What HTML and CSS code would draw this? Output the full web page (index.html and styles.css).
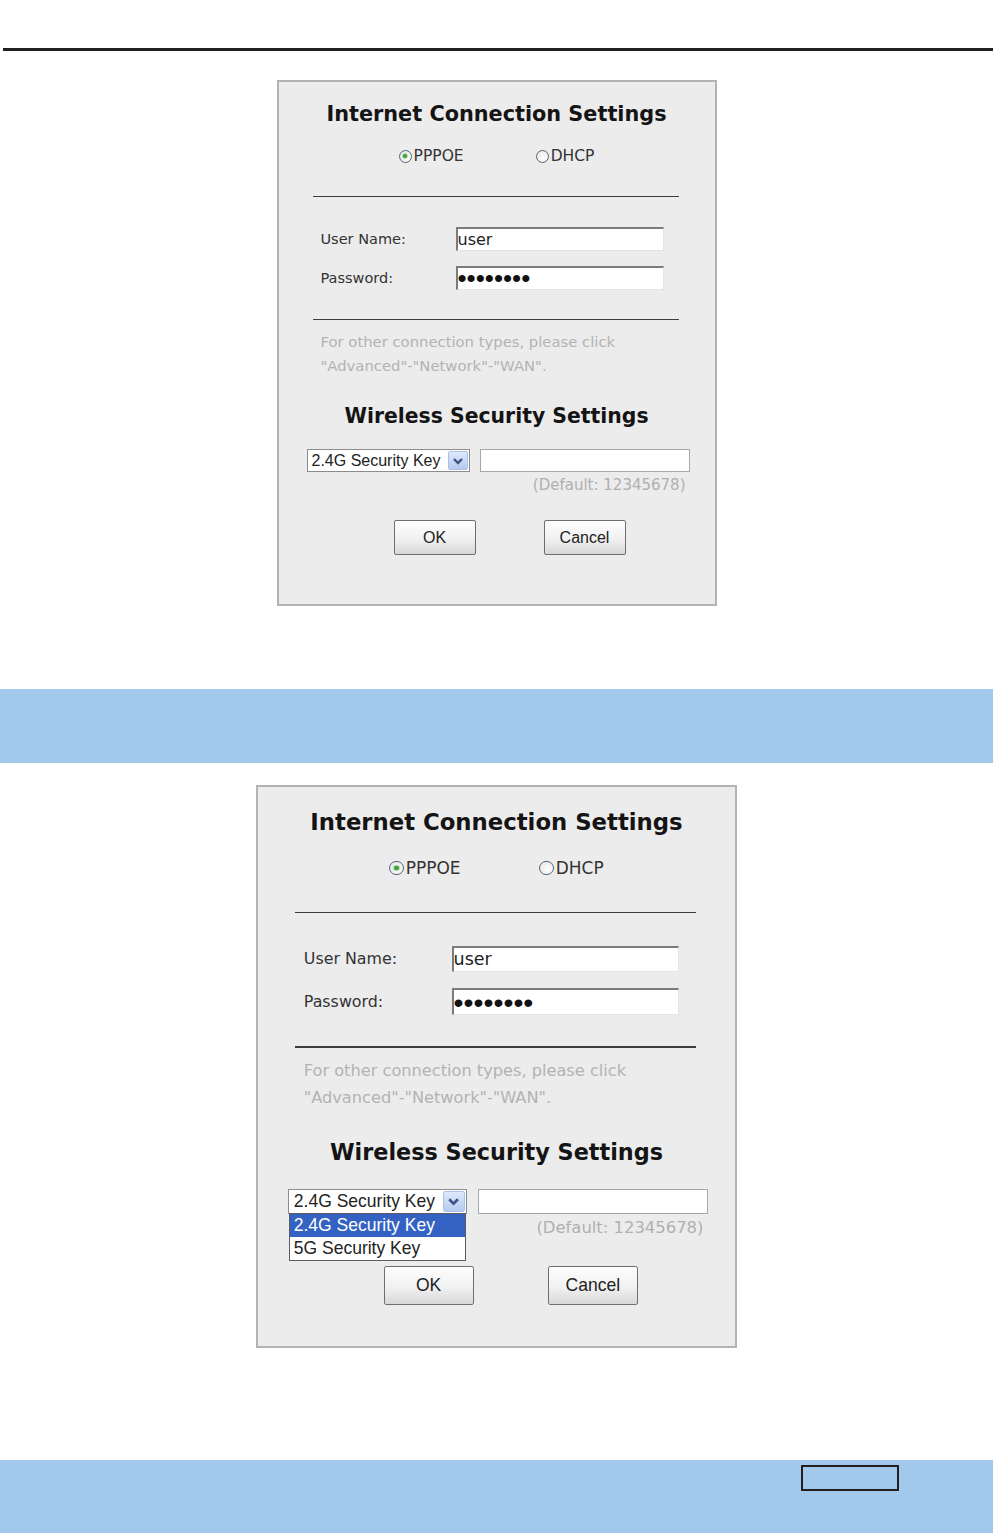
FILE: index.html
```html
<!DOCTYPE html>
<html lang="en">
<head>
    <meta charset="UTF-8">
    <meta name="viewport" content="width=device-width, initial-scale=1.0">
    <title>Quick Setup</title>
    <link rel="stylesheet" href="styles.css">
</head>
<body>
    <div class="rule"></div>

    <div class="dialog first">
        <h2 class="dialog-title">Internet Connection Settings</h2>
        <div class="radios">
            <label class="radio-item"><span class="radio checked"></span>PPPOE</label>
            <label class="radio-item"><span class="radio"></span>DHCP</label>
        </div>
        <div class="divider"></div>
        <div class="form-row">
            <span class="form-label">User Name:</span>
            <input class="text-field" type="text" value="user">
        </div>
        <div class="form-row second">
            <span class="form-label">Password:</span>
            <input class="text-field secret" type="password" value="12345678">
        </div>
        <div class="divider lower"></div>
        <p class="note">For other connection types, please click<br>"Advanced"-"Network"-"WAN".</p>
        <h2 class="dialog-title wireless">Wireless Security Settings</h2>
        <div class="key-row">
            <div class="select">
                <span class="select-value">2.4G Security Key</span>
                <span class="select-btn">
                    <svg width="12" height="10" viewBox="0 0 12 10"><path d="M2 3 L6 7 L10 3" fill="none" stroke="#3d5488" stroke-width="2.4"/></svg>
                </span>
            </div>
            <input class="key-field" type="text">
        </div>
        <div class="default-hint">(Default: 12345678)</div>
        <div class="buttons">
            <button>OK</button>
            <button>Cancel</button>
        </div>
    </div>

    <div class="band first"></div>

    <div class="dialog large">
        <h2 class="dialog-title">Internet Connection Settings</h2>
        <div class="radios">
            <label class="radio-item"><span class="radio checked"></span>PPPOE</label>
            <label class="radio-item"><span class="radio"></span>DHCP</label>
        </div>
        <div class="divider"></div>
        <div class="form-row">
            <span class="form-label">User Name:</span>
            <input class="text-field" type="text" value="user">
        </div>
        <div class="form-row second">
            <span class="form-label">Password:</span>
            <input class="text-field secret" type="password" value="12345678">
        </div>
        <div class="divider lower"></div>
        <p class="note">For other connection types, please click<br>"Advanced"-"Network"-"WAN".</p>
        <h2 class="dialog-title wireless">Wireless Security Settings</h2>
        <div class="key-row">
            <div class="select">
                <span class="select-value">2.4G Security Key</span>
                <span class="select-btn">
                    <svg width="12" height="10" viewBox="0 0 12 10"><path d="M2 3 L6 7 L10 3" fill="none" stroke="#3d5488" stroke-width="2.4"/></svg>
                </span>
                <ul class="listbox">
                    <li class="active">2.4G Security Key</li>
                    <li>5G Security Key</li>
                </ul>
            </div>
            <input class="key-field" type="text">
        </div>
        <div class="default-hint">(Default: 12345678)</div>
        <div class="buttons">
            <button>OK</button>
            <button>Cancel</button>
        </div>
    </div>

    <div class="band footer">
        <div class="page-box"></div>
    </div>
</body>
</html>
```

FILE: styles.css
```css
body {
    margin: 0;
    background: #fff;
    font-family: "DejaVu Sans", sans-serif;
}
.rule {
    height: 3px;
    margin: 48px 0 0 3px;
    background: #231f20;
}
.dialog {
    width: 436px;
    margin: 0 auto;
    padding: 18px 0 49px;
    background: #ececec;
    border: 2px solid #b3b3b3;
    color: #333;
    font-family: "DejaVu Sans", sans-serif;
}
.dialog.first {
    margin-top: 29px;
}
.dialog.large {
    zoom: 1.095;
    padding-bottom: 38px;
}
.dialog-title {
    margin: 0;
    font-size: 20.8px;
    line-height: 28px;
    font-weight: bold;
    text-align: center;
    color: #141414;
}
.dialog-title.wireless {
    margin-top: 24px;
    font-size: 20.4px;
}
.radios {
    display: flex;
    justify-content: center;
    align-items: center;
    gap: 72px;
    height: 20px;
    margin-top: 18px;
    font-size: 15.5px;
    color: #333;
}
.radio-item {
    display: flex;
    align-items: center;
    gap: 2px;
}
.radio {
    position: relative;
    width: 13px;
    height: 13px;
    box-sizing: border-box;
    border: 1px solid #56667a;
    border-radius: 50%;
    background: radial-gradient(circle at 60% 60%, #fff, #e2e2e2);
}
.radio.checked::after {
    content: "";
    position: absolute;
    left: 3.5px;
    top: 3.5px;
    width: 4px;
    height: 4px;
    border-radius: 50%;
    background: #3f9c42;
    box-shadow: 0 0 1px 1px #a8dca8;
}
.divider {
    width: 366px;
    height: 1px;
    margin: 30px 0 0 34px;
    background: #3c3c3c;
}
.divider.lower {
    margin-top: 29px;
}
.form-row {
    display: flex;
    align-items: center;
    margin-top: 30px;
    padding-left: 42px;
}
.form-row.second {
    margin-top: 15px;
}
.form-label {
    width: 135px;
    font-size: 14.5px;
}
.text-field {
    width: 208px;
    height: 24px;
    box-sizing: border-box;
    margin: 0;
    padding: 0;
    border-style: solid;
    border-width: 2px 1px 1px 2px;
    border-color: #7b7b7b #e4e4e4 #e4e4e4 #7b7b7b;
    background: #fff;
    font: 16px "DejaVu Sans", sans-serif;
    color: #222;
}
.text-field.secret {
    font: 26px "Liberation Sans", Arial, sans-serif;
    color: #111;
}
.note {
    margin: 10px 0 0;
    padding-left: 42px;
    font-size: 14.8px;
    line-height: 24px;
    color: #b3b3b3;
}
.key-row {
    display: flex;
    gap: 10px;
    margin-top: 19px;
    padding-left: 28px;
}
.select {
    position: relative;
    width: 163px;
    height: 23px;
    box-sizing: border-box;
    display: flex;
    align-items: center;
    justify-content: space-between;
    padding: 0 1px 0 4px;
    border: 1px solid #8c8c8c;
    background: #fff;
    font: 16px "Liberation Sans", Arial, sans-serif;
    color: #222;
}
.select-btn {
    width: 20px;
    height: 19px;
    box-sizing: border-box;
    display: flex;
    align-items: center;
    justify-content: center;
    border: 1px solid #aabfe4;
    border-radius: 2px;
    background: linear-gradient(#dfe9fb, #b5caf0);
}
.listbox {
    position: absolute;
    left: 0;
    top: 100%;
    width: 161px;
    box-sizing: border-box;
    margin: 0;
    padding: 0;
    list-style: none;
    border: 1px solid #5c5c5c;
    background: #fff;
}
.listbox li {
    height: 21px;
    line-height: 21px;
    padding-left: 3px;
}
.listbox li.active {
    background: #3362c2;
    color: #fff;
}
.key-field {
    width: 210px;
    height: 23px;
    box-sizing: border-box;
    margin: 0;
    border: 1px solid #a2a8ae;
    background: #fff;
}
.default-hint {
    margin-top: 4px;
    padding-right: 29px;
    line-height: 18px;
    text-align: right;
    font-size: 15px;
    color: #b0b0b0;
}
.buttons {
    display: flex;
    gap: 68px;
    margin-top: 26px;
    padding-left: 115px;
}
.buttons button {
    width: 82px;
    height: 35px;
    padding: 0;
    border: 1px solid #6e6e6e;
    border-radius: 2px;
    background: linear-gradient(#fdfdfd, #f1f1f1 55%, #d8d8d8);
    font: 16px "Liberation Sans", Arial, sans-serif;
    color: #222;
}
.band {
    height: 74px;
    background: #a2c8eb;
}
.band.first {
    margin: 83px 0 22px;
}
.band.footer {
    height: 73px;
    margin-top: 112px;
    padding-top: 5px;
    box-sizing: border-box;
}
.page-box {
    width: 98px;
    height: 26px;
    box-sizing: border-box;
    margin-left: 801px;
    border: 2px solid #231f20;
}
```
